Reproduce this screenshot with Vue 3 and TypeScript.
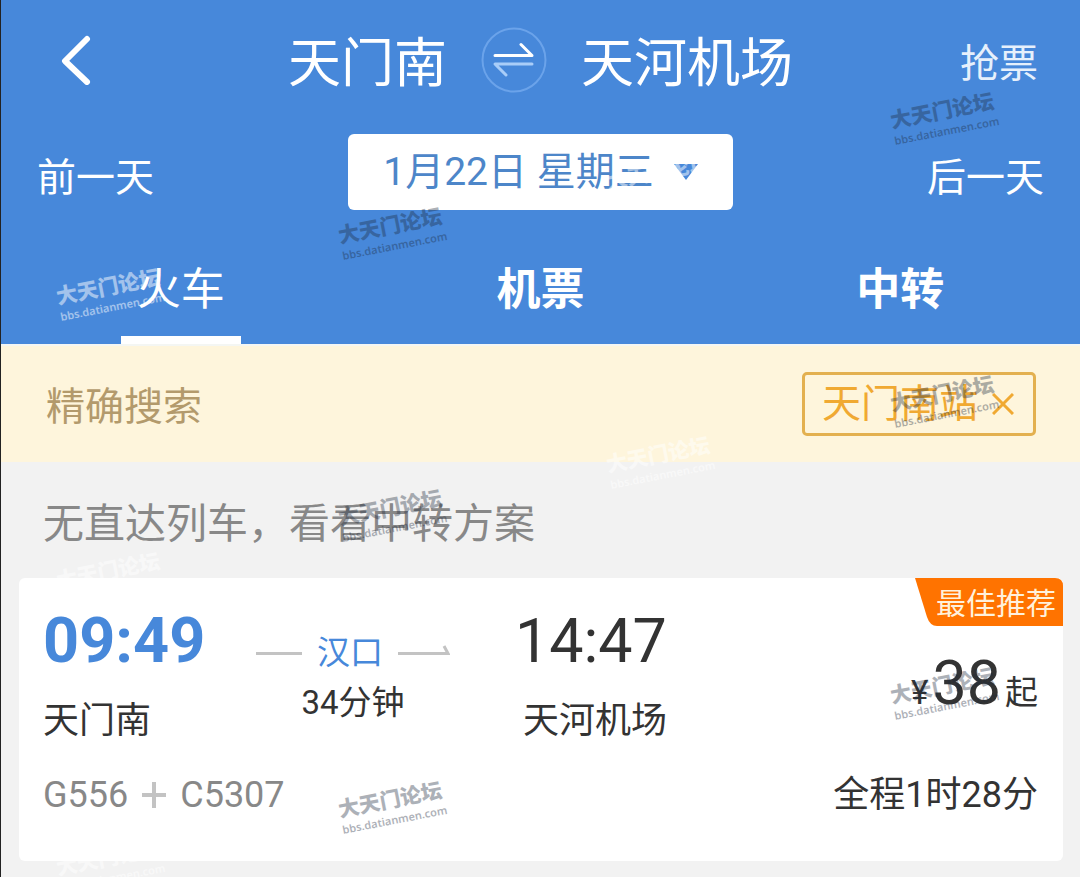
<script setup lang="ts">
import { ref } from 'vue'

interface Mark { x: number; y: number; light?: boolean }

const tabs = ['火车', '机票', '中转']
const active = ref(0)
const marks: Mark[] = [
  { x: 890, y: 93 },
  { x: 338, y: 208 },
  { x: 890, y: 376 },
  { x: 338, y: 490 },
  { x: 890, y: 668 },
  { x: 338, y: 782 },
  { x: 56, y: 269, light: true },
  { x: 606, y: 154, light: true },
  { x: 606, y: 437, light: true },
  { x: 56, y: 553, light: true },
  { x: 56, y: 840, light: true },
]
</script>

<template>
  <div class="page">
    <header class="head">
      <div class="route">
        <button class="back" aria-label="返回">
          <svg width="32" height="50" viewBox="0 0 32 50"><path d="M26 4 4 26 26 47" /></svg>
        </button>
        <h1 class="cities">
          <span>天门南</span>
          <button class="swap" aria-label="交换">
            <svg width="66" height="66" viewBox="0 0 66 66">
              <circle cx="33" cy="33" r="31.5" />
              <path class="go" d="M14 28.500H51L40 17.500" />
              <path class="ret" d="M51 37H14L25 48" />
            </svg>
          </button>
          <span>天河机场</span>
        </h1>
        <button class="grab">抢票</button>
      </div>
      <div class="days">
        <button class="day">前一天</button>
        <button class="date">
          <span>1月22日 星期三</span>
          <svg width="24" height="16" viewBox="0 0 24 16"><path d="M0 0H24L12 16Z" /></svg>
        </button>
        <button class="day">后一天</button>
      </div>
      <nav class="tabs">
        <button v-for="(t, i) in tabs" :key="t" class="tab" :class="{ on: i === active }" @click="active = i">{{ t }}</button>
      </nav>
    </header>

    <section class="filter">
      <span class="label">精确搜索</span>
      <button class="chip">
        天门南站
        <svg width="22" height="22" viewBox="0 0 22 22"><path d="M1 1 21 21M21 1 1 21" /></svg>
      </button>
    </section>

    <main class="body">
      <p class="hint">无直达列车，看看中转方案</p>
      <article class="card">
        <div class="badge">
          <svg viewBox="0 0 148 48" preserveAspectRatio="none"><path d="M0 0H140Q148 0 148 8V48H22Q15 48 12 39Z" /></svg>
          <span>最佳推荐</span>
        </div>
        <div class="stop from">
          <strong class="time">09:49</strong>
          <span class="station">天门南</span>
        </div>
        <div class="via">
          <div class="line">
            <svg width="46" height="16" viewBox="0 0 46 16"><path d="M0 8.500H46" /></svg>
            <span>汉口</span>
            <svg width="52" height="16" viewBox="0 0 52 16"><path d="M0 8.500H50L46 1" /></svg>
          </div>
          <span class="wait">34分钟</span>
        </div>
        <div class="stop to">
          <span class="time">14:47</span>
          <span class="station">天河机场</span>
        </div>
        <div class="price"><span class="yen">¥</span><span class="amount">38</span><span class="unit">起</span></div>
        <div class="trains">
          <span>G556</span>
          <svg width="24" height="26" viewBox="0 0 24 26"><path d="M0 13H24M12 0V26" /></svg>
          <span>C5307</span>
        </div>
        <div class="total">全程1时28分</div>
      </article>
    </main>

    <div class="marks" aria-hidden="true">
      <div v-for="(m, i) in marks" :key="i" class="mark" :class="{ light: m.light }" :style="{ left: m.x + 'px', top: m.y + 'px' }">
        <b>大天门论坛</b>
        <i>bbs.datianmen.com</i>
      </div>
    </div>
  </div>
</template>

<style>
body { margin: 0; background: #f2f2f2; }
</style>

<style scoped>
* { box-sizing: border-box; }
.page {
  position: relative;
  min-height: 100vh;
  overflow: hidden;
  border-left: 1px solid #222;
  background: #f2f2f2;
  color: #333;
  font-family: Roboto, "Noto Sans CJK SC", sans-serif;
}
button { margin: 0; padding: 0; border: 0; background: none; color: inherit; font: inherit; cursor: pointer; }
svg { display: block; fill: none; flex: none; }
.head { background: #4788da; color: #fff; border-bottom: 2px solid #f4f6f3; }
.route { display: grid; grid-template-columns: 1fr auto 1fr; align-items: center; height: 120px; padding: 0 42px; }
.back { justify-self: start; padding-left: 18px; }
.back svg { stroke: #fff; stroke-width: 6; stroke-linecap: round; stroke-linejoin: round; }
.cities { display: flex; align-items: center; gap: 34px; margin: 0; font-size: 53px; line-height: 80px; font-weight: 400; }
.cities span { padding-top: 8px; }
.swap circle { stroke: #6ba3ea; stroke-width: 2; }
.swap path { stroke-width: 3; stroke-linecap: round; stroke-linejoin: round; }
.swap .go { stroke: #fff; }
.swap .ret { stroke: #a9cdf8; }
.grab { justify-self: end; padding-top: 8px; font-size: 39px; line-height: 56px; color: #e6f0fc; }
.days { display: grid; grid-template-columns: 1fr 385px 1fr; align-items: center; padding: 14px 36px 0; }
.day { justify-self: start; padding-top: 12px; font-size: 39px; line-height: 56px; }
.day:last-child { justify-self: end; }
.date { display: flex; align-items: center; justify-content: center; gap: 20px; height: 76px; border-radius: 6px; background: #fff; color: #4d86c9; font-size: 39px; line-height: 56px; }
.date path { fill: #4788da; }
.tabs { display: grid; grid-template-columns: repeat(3, 1fr); height: 134px; }
.tab { position: relative; padding-top: 26px; font-size: 44px; line-height: 64px; font-weight: 700; }
.tab.on { font-weight: 400; }
.tab.on::after { content: ""; position: absolute; bottom: 0; left: 50%; width: 120px; height: 8px; margin-left: -60px; background: #fff; }
.filter { display: flex; align-items: center; justify-content: space-between; height: 116px; padding: 0 44px 0 45px; background: #fef5dc; color: #b39a6c; font-size: 39px; line-height: 56px; }
.label { padding-top: 6px; }
.chip { display: flex; align-items: center; gap: 14px; height: 64px; padding: 0 19px 0 17px; border: 3px solid #e3b04f; border-radius: 5px; color: #f0a932; line-height: 56px; }
.chip path { stroke: #f0a932; stroke-width: 3; }
.body { padding: 32px 17px 16px 18px; }
.hint { margin: 0 0 24px; padding-left: 24px; font-size: 41px; line-height: 60px; color: #888; }
.card {
  position: relative;
  display: grid;
  grid-template-columns: 213px 225px 1fr 1fr;
  grid-template-rows: 170px 92px;
  min-height: 283px;
  padding: 21px 25px 0 24px;
  border-radius: 6px;
  background: #fff;
}
.badge { position: absolute; top: 0; right: 0; width: 148px; height: 48px; }
.badge svg { position: absolute; width: 100%; height: 100%; }
.badge path { fill: #ff7300; }
.badge span { position: relative; display: block; padding-right: 7px; text-align: right; font-size: 30px; line-height: 52px; color: #fff1dc; }
.stop { display: flex; flex-direction: column; justify-self: start; }
.time { font-size: 61px; line-height: 84px; font-weight: 400; }
.from .time { color: #4788da; font-size: 63px; font-weight: 700; }
.station { margin-top: 12px; font-size: 36px; line-height: 52px; }
.to { align-items: flex-end; margin-left: 34px; }
.via { justify-self: start; padding-top: 30px; text-align: center; white-space: nowrap; }
.line { display: flex; align-items: center; gap: 15px; font-size: 33px; line-height: 48px; color: #4788da; }
.line path { stroke: #c3c3c3; stroke-width: 3; }
.wait { display: block; font-size: 33px; line-height: 52px; }
.price { display: flex; align-items: baseline; justify-self: end; padding-top: 42px; white-space: nowrap; }
.yen { margin-right: 4px; font-size: 33px; }
.amount { font-size: 61px; line-height: 84px; }
.unit { margin-left: 4px; font-size: 33px; }
.trains { grid-column: 1 / 4; display: flex; align-items: center; gap: 14px; height: 52px; font-size: 36px; color: #888; }
.trains path { stroke: #c3c3c3; stroke-width: 4; }
.total { justify-self: end; font-size: 36px; line-height: 52px; white-space: nowrap; }
.marks { position: absolute; inset: 0; overflow: hidden; pointer-events: none; }
.mark { position: absolute; width: 108px; height: 50px; display: flex; flex-direction: column; justify-content: center; color: #1c2a3c; opacity: .36; transform: rotate(-11deg); white-space: nowrap; }
.mark b { font-size: 21px; line-height: 24px; font-weight: 900; }
.mark i { font: 600 11px/15px "Noto Sans", sans-serif; }
.mark.light { color: #fff; opacity: .5; }
</style>
